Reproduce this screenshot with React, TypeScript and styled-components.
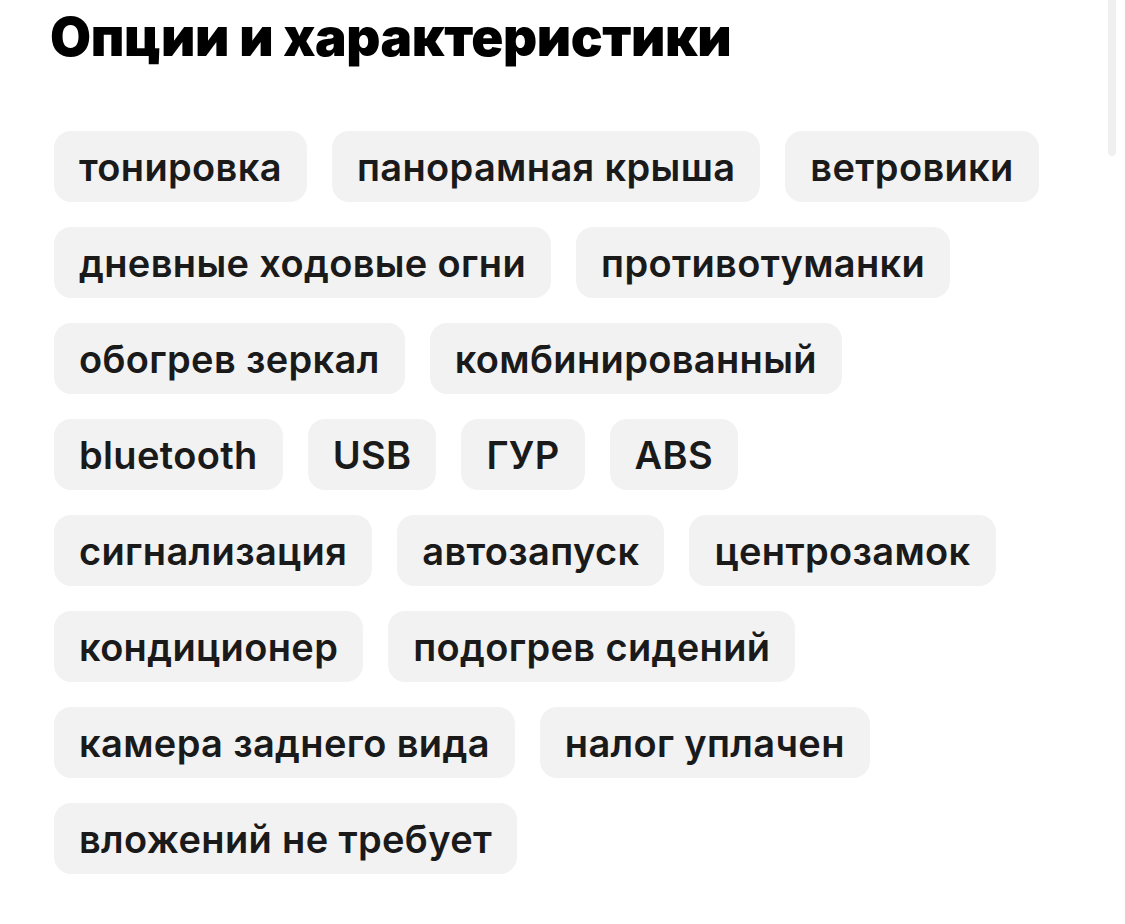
import React from 'react';
import { styled, createGlobalStyle } from 'styled-components';

const GlobalStyle = createGlobalStyle`
  html, body {
    margin: 0;
    padding: 0;
    background: #ffffff;
    font-family: Inter, "Noto Sans", sans-serif;
    -webkit-font-smoothing: antialiased;
  }
`;

const Page = styled.div`
  position: relative;
  height: 924px;
  overflow: hidden;
`;

const Section = styled.section`
  padding: 4px 0 0 54px;
`;

const Title = styled.h2`
  margin: 0 0 60px -4px;
  font-size: 53px;
  line-height: 67px;
  font-weight: 900;
  letter-spacing: -0.4px;
  color: #000000;
`;

const ChipList = styled.div`
  display: flex;
  flex-wrap: wrap;
  gap: 25px;
  width: 1010px;
`;

const Chip = styled.span`
  display: inline-flex;
  align-items: center;
  height: 71px;
  padding: 0 25px;
  border-radius: 17px;
  background: #f2f2f2;
  color: #1a1a1a;
  font-size: 38px;
  font-weight: 600;
  letter-spacing: 0.35px;
  white-space: nowrap;
`;

const Scrollbar = styled.div`
  position: absolute;
  top: 0;
  right: 9px;
  width: 8px;
  height: 156px;
  border-radius: 0 0 4px 4px;
  background: #f0f0f0;
`;

const OPTIONS = [
  'тонировка',
  'панорамная крыша',
  'ветровики',
  'дневные ходовые огни',
  'противотуманки',
  'обогрев зеркал',
  'комбинированный',
  'bluetooth',
  'USB',
  'ГУР',
  'ABS',
  'сигнализация',
  'автозапуск',
  'центрозамок',
  'кондиционер',
  'подогрев сидений',
  'камера заднего вида',
  'налог уплачен',
  'вложений не требует',
];

const App = () => {
  return (
    <Page>
      <GlobalStyle />
      <Section>
        <Title>Опции и характеристики</Title>
        <ChipList>
          {OPTIONS.map((option) => (
            <Chip key={option}>{option}</Chip>
          ))}
        </ChipList>
      </Section>
      <Scrollbar />
    </Page>
  );
};

export default App;
